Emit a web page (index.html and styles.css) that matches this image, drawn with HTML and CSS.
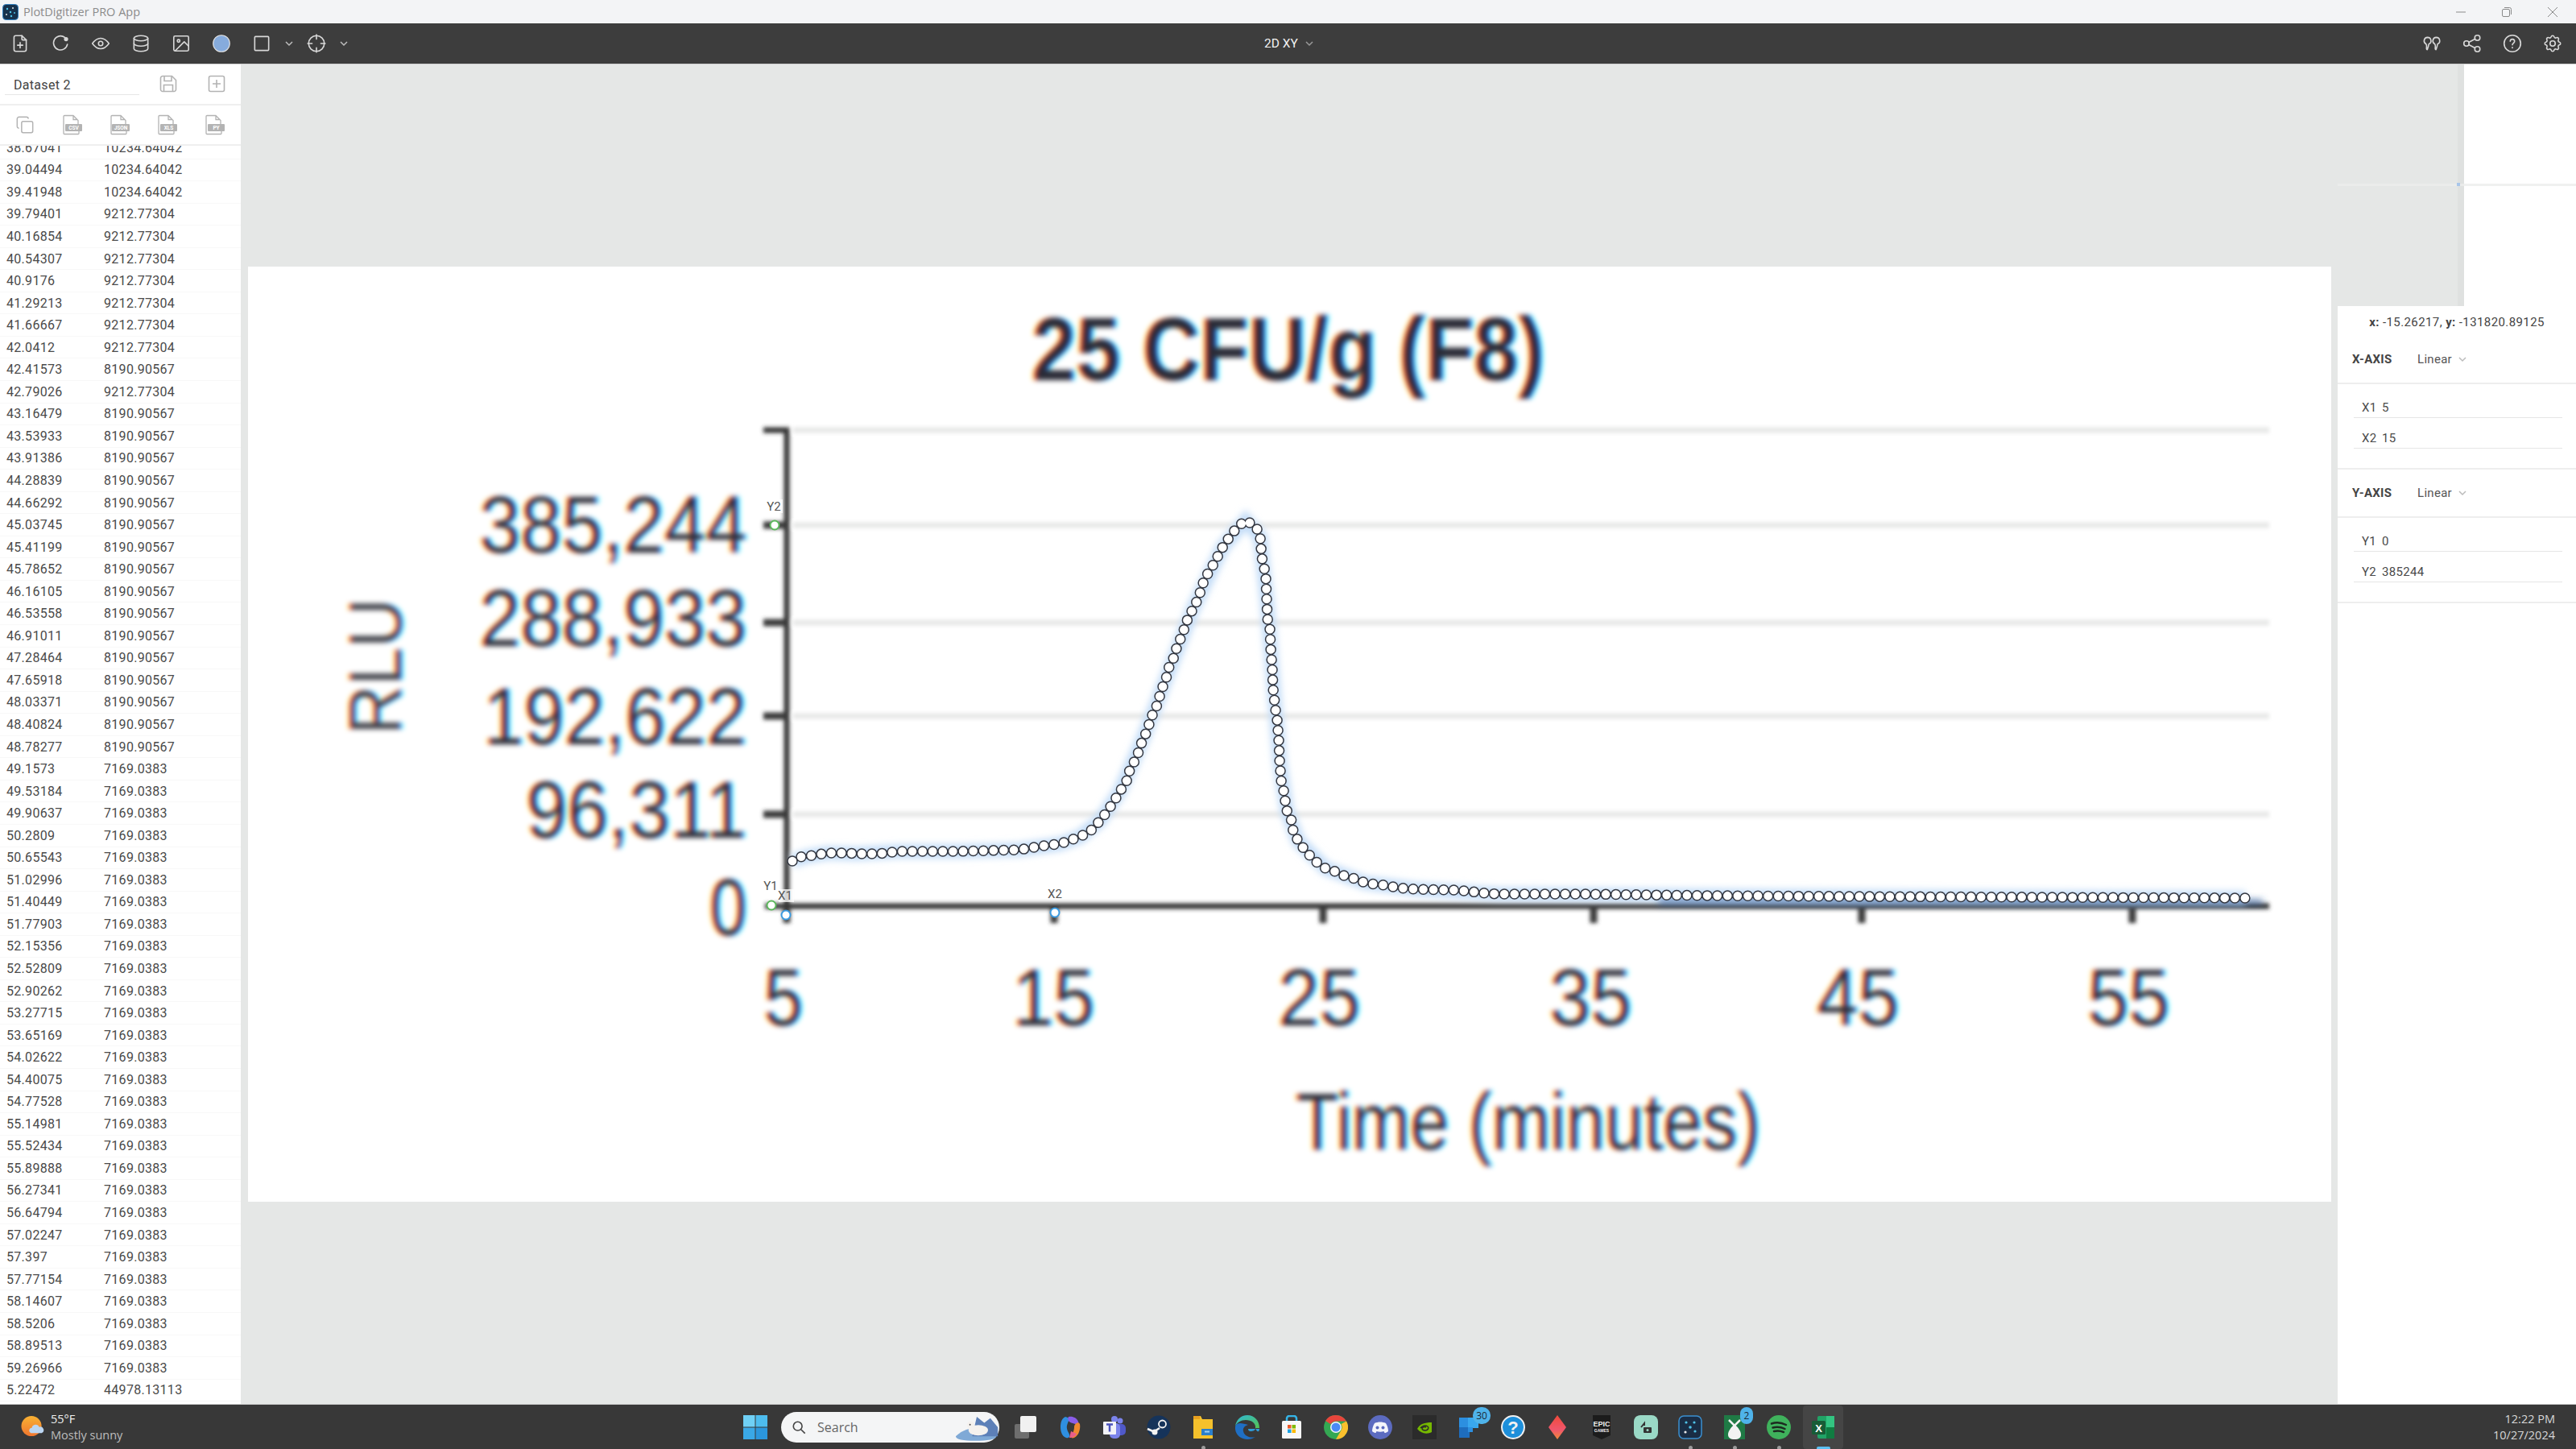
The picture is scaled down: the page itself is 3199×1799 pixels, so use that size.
FILE: index.html
```html
<!DOCTYPE html>
<html lang="en">
<head>
    <meta charset="UTF-8">
    <title>PlotDigitizer PRO App</title>
    <link rel="stylesheet" href="styles.css">
</head>
<body>

    <div class="titlebar">
        <svg class="app-logo" viewBox="0 0 20 20">
            <rect x="0.5" y="0.5" width="19" height="19" rx="4" fill="#17324d" stroke="#2f7fc0"/>
            <circle cx="6" cy="6" r="1.2" fill="#4fc3e8"/><circle cx="13" cy="5" r="1" fill="#e8e8e8"/>
            <circle cx="10" cy="10" r="1.2" fill="#4fc3e8"/><circle cx="15" cy="11" r="1" fill="#4fc3e8"/>
            <circle cx="5" cy="13" r="1" fill="#e8e8e8"/><circle cx="11" cy="15" r="1.2" fill="#4fc3e8"/>
        </svg>
        <span class="app-name">PlotDigitizer PRO App</span>
        <div class="win-controls">
            <svg viewBox="0 0 14 14"><path d="M1 7h12"/></svg>
            <svg viewBox="0 0 14 14"><rect x="1.5" y="3.5" width="9" height="9" rx="1.5"/><path d="M4 1.5h6.5a2 2 0 0 1 2 2V10"/></svg>
            <svg viewBox="0 0 14 14"><path d="M1 1l12 12M13 1L1 13"/></svg>
        </div>
    </div>

    <div class="toolbar">
        <div class="tool-group">
            <svg class="tool" viewBox="0 0 24 24"><path d="M14 3v4a1 1 0 0 0 1 1h4"/><path d="M17 21H7a2 2 0 0 1-2-2V5a2 2 0 0 1 2-2h7l5 5v11a2 2 0 0 1-2 2z"/><path d="M12 11v6M9 14h6"/></svg>
            <svg class="tool" viewBox="0 0 24 24"><path d="M20 13a8 8 0 1 1-3-8"/><circle class="solid" cx="18.5" cy="7" r="2.4"/></svg>
            <svg class="tool" viewBox="0 0 24 24"><path d="M12 18c-3.6 0-6.6-2-9.5-6C5.400 8 8.400 6 12 6s6.600 2 9.500 6c-2.900 4-5.900 6-9.500 6z"/><circle cx="12" cy="12" r="2.500"/></svg>
            <svg class="tool" viewBox="0 0 24 24"><ellipse cx="12" cy="6" rx="8" ry="3"/><path d="M4 6v6c0 1.660 3.580 3 8 3s8-1.340 8-3V6"/><path d="M4 12v6c0 1.660 3.580 3 8 3s8-1.340 8-3v-6"/></svg>
            <svg class="tool" viewBox="0 0 24 24"><rect x="3.500" y="3.500" width="17" height="17" rx="1.500"/><circle cx="9" cy="9" r="1.500"/><path d="M20.500 15l-5-5L5 20.500"/></svg>
            <svg class="tool" viewBox="0 0 24 24"><circle class="color-dot" cx="12" cy="12" r="9.500"/></svg>
            <svg class="tool" viewBox="0 0 24 24"><rect x="4" y="4" width="16" height="16" rx="1"/></svg>
            <svg class="chev" viewBox="0 0 12 12"><path d="M2 4l4 4 4-4"/></svg>
            <svg class="tool tool-wide" viewBox="0 0 24 24"><circle cx="12" cy="12" r="9"/><path d="M12 2v5M12 17v5M2 12h5M17 12h5"/></svg>
            <svg class="chev" viewBox="0 0 12 12"><path d="M2 4l4 4 4-4"/></svg>
        </div>
        <div class="mode-select">2D XY <svg class="chev" viewBox="0 0 12 12"><path d="M2 4l4 4 4-4"/></svg></div>
        <div class="tool-group tool-group-right">
            <svg class="tool" viewBox="0 0 24 24"><path d="M7 5a4 4 0 0 1 1.500 7.700c-.3 2.300-.8 4.100-1.800 6.300-1 0-.9-1.500-.7-3.300.1-1.200 0-2.300-.8-3.200A4 4 0 0 1 7 5z"/><path d="M17 5a4 4 0 0 1 1.500 7.700c-.3 2.300-.8 4.100-1.800 6.300-1 0-.9-1.500-.7-3.300.1-1.200 0-2.300-.8-3.200A4 4 0 0 1 17 5z"/></svg>
            <svg class="tool" viewBox="0 0 24 24"><circle cx="5.500" cy="12" r="3"/><circle cx="18" cy="5.500" r="3"/><circle cx="18" cy="18.500" r="3"/><path d="M8.200 10.700l7-3.700M8.200 13.300l7 3.700"/></svg>
            <svg class="tool" viewBox="0 0 24 24"><circle cx="12" cy="12" r="9.500"/><path d="M12 16.500v.5M12 13.500c0-2 2.500-1.800 2.500-4a2.500 2.500 0 0 0-5 0"/></svg>
            <svg class="tool" viewBox="0 0 24 24"><path d="M10.325 4.317c.426-1.756 2.924-1.756 3.350 0a1.724 1.724 0 0 0 2.573 1.066c1.543-.94 3.310.826 2.370 2.370a1.724 1.724 0 0 0 1.065 2.572c1.756.426 1.756 2.924 0 3.350a1.724 1.724 0 0 0-1.066 2.573c.94 1.543-.826 3.310-2.370 2.370a1.724 1.724 0 0 0-2.572 1.065c-.426 1.756-2.924 1.756-3.350 0a1.724 1.724 0 0 0-2.573-1.066c-1.543.94-3.310-.826-2.370-2.370a1.724 1.724 0 0 0-1.065-2.572c-1.756-.426-1.756-2.924 0-3.350a1.724 1.724 0 0 0 1.066-2.573c-.94-1.543.826-3.310 2.370-2.370 1 .608 2.296.07 2.572-1.065z"/><circle cx="12" cy="12" r="3"/></svg>
        </div>
    </div>

    <div class="workspace">

        <aside class="sidebar">
            <div class="dataset-head">
                <div class="dataset-name">Dataset 2</div>
                <svg class="side-icon save-icon" viewBox="0 0 24 24"><path d="M5 2.500h11.500l5 5V19a2.500 2.500 0 0 1-2.500 2.500H5A2.500 2.500 0 0 1 2.500 19V5A2.500 2.500 0 0 1 5 2.500z"/><path d="M7 2.500v6h9v-6M6.500 21.500v-8h11v8"/></svg>
                <svg class="side-icon add-icon" viewBox="0 0 24 24"><rect x="2.500" y="2.500" width="19" height="19" rx="2"/><path d="M12 7v10M7 12h10"/></svg>
            </div>
            <div class="export-row">
                <svg class="side-icon" viewBox="0 0 26 26"><rect x="8.500" y="8.500" width="15" height="15" rx="2"/><path d="M5 17.500a2.500 2.500 0 0 1-2.500-2.500V5A2.500 2.500 0 0 1 5 2.500h10A2.500 2.500 0 0 1 17.500 5"/></svg>
                <svg class="file-icon" viewBox="0 0 26 26"><path d="M15 1.500v5h5M22 20.500v3a1 1 0 0 1-1 1H4a1 1 0 0 1-1-1v-21a1 1 0 0 1 1-1h11l6 6v5"/><rect class="file-band" x="5" y="12" width="21" height="9" rx="1"/><text class="file-type" x="15.500" y="19">CSV</text></svg>
                <svg class="file-icon" viewBox="0 0 26 26"><path d="M15 1.500v5h5M22 20.500v3a1 1 0 0 1-1 1H4a1 1 0 0 1-1-1v-21a1 1 0 0 1 1-1h11l6 6v5"/><rect class="file-band" x="4" y="12" width="22" height="9" rx="1"/><text class="file-type" x="15" y="19">JSON</text></svg>
                <svg class="file-icon" viewBox="0 0 26 26"><path d="M15 1.500v5h5M22 20.500v3a1 1 0 0 1-1 1H4a1 1 0 0 1-1-1v-21a1 1 0 0 1 1-1h11l6 6v5"/><rect class="file-band" x="5" y="12" width="21" height="9" rx="1"/><text class="file-type" x="15.500" y="19">XLS</text></svg>
                <svg class="file-icon" viewBox="0 0 26 26"><path d="M15 1.500v5h5M22 20.500v3a1 1 0 0 1-1 1H4a1 1 0 0 1-1-1v-21a1 1 0 0 1 1-1h11l6 6v5"/><rect class="file-band" x="5" y="12" width="21" height="9" rx="1"/><text class="file-type" x="15.500" y="19">PY</text></svg>
            </div>
            <div class="data-list">
                <div class="data-rows">
                    <div class="data-row"><span>38.67041</span><span>10234.64042</span></div>
                    <div class="data-row"><span>39.04494</span><span>10234.64042</span></div>
                    <div class="data-row"><span>39.41948</span><span>10234.64042</span></div>
                    <div class="data-row"><span>39.79401</span><span>9212.77304</span></div>
                    <div class="data-row"><span>40.16854</span><span>9212.77304</span></div>
                    <div class="data-row"><span>40.54307</span><span>9212.77304</span></div>
                    <div class="data-row"><span>40.9176</span><span>9212.77304</span></div>
                    <div class="data-row"><span>41.29213</span><span>9212.77304</span></div>
                    <div class="data-row"><span>41.66667</span><span>9212.77304</span></div>
                    <div class="data-row"><span>42.0412</span><span>9212.77304</span></div>
                    <div class="data-row"><span>42.41573</span><span>8190.90567</span></div>
                    <div class="data-row"><span>42.79026</span><span>9212.77304</span></div>
                    <div class="data-row"><span>43.16479</span><span>8190.90567</span></div>
                    <div class="data-row"><span>43.53933</span><span>8190.90567</span></div>
                    <div class="data-row"><span>43.91386</span><span>8190.90567</span></div>
                    <div class="data-row"><span>44.28839</span><span>8190.90567</span></div>
                    <div class="data-row"><span>44.66292</span><span>8190.90567</span></div>
                    <div class="data-row"><span>45.03745</span><span>8190.90567</span></div>
                    <div class="data-row"><span>45.41199</span><span>8190.90567</span></div>
                    <div class="data-row"><span>45.78652</span><span>8190.90567</span></div>
                    <div class="data-row"><span>46.16105</span><span>8190.90567</span></div>
                    <div class="data-row"><span>46.53558</span><span>8190.90567</span></div>
                    <div class="data-row"><span>46.91011</span><span>8190.90567</span></div>
                    <div class="data-row"><span>47.28464</span><span>8190.90567</span></div>
                    <div class="data-row"><span>47.65918</span><span>8190.90567</span></div>
                    <div class="data-row"><span>48.03371</span><span>8190.90567</span></div>
                    <div class="data-row"><span>48.40824</span><span>8190.90567</span></div>
                    <div class="data-row"><span>48.78277</span><span>8190.90567</span></div>
                    <div class="data-row"><span>49.1573</span><span>7169.0383</span></div>
                    <div class="data-row"><span>49.53184</span><span>7169.0383</span></div>
                    <div class="data-row"><span>49.90637</span><span>7169.0383</span></div>
                    <div class="data-row"><span>50.2809</span><span>7169.0383</span></div>
                    <div class="data-row"><span>50.65543</span><span>7169.0383</span></div>
                    <div class="data-row"><span>51.02996</span><span>7169.0383</span></div>
                    <div class="data-row"><span>51.40449</span><span>7169.0383</span></div>
                    <div class="data-row"><span>51.77903</span><span>7169.0383</span></div>
                    <div class="data-row"><span>52.15356</span><span>7169.0383</span></div>
                    <div class="data-row"><span>52.52809</span><span>7169.0383</span></div>
                    <div class="data-row"><span>52.90262</span><span>7169.0383</span></div>
                    <div class="data-row"><span>53.27715</span><span>7169.0383</span></div>
                    <div class="data-row"><span>53.65169</span><span>7169.0383</span></div>
                    <div class="data-row"><span>54.02622</span><span>7169.0383</span></div>
                    <div class="data-row"><span>54.40075</span><span>7169.0383</span></div>
                    <div class="data-row"><span>54.77528</span><span>7169.0383</span></div>
                    <div class="data-row"><span>55.14981</span><span>7169.0383</span></div>
                    <div class="data-row"><span>55.52434</span><span>7169.0383</span></div>
                    <div class="data-row"><span>55.89888</span><span>7169.0383</span></div>
                    <div class="data-row"><span>56.27341</span><span>7169.0383</span></div>
                    <div class="data-row"><span>56.64794</span><span>7169.0383</span></div>
                    <div class="data-row"><span>57.02247</span><span>7169.0383</span></div>
                    <div class="data-row"><span>57.397</span><span>7169.0383</span></div>
                    <div class="data-row"><span>57.77154</span><span>7169.0383</span></div>
                    <div class="data-row"><span>58.14607</span><span>7169.0383</span></div>
                    <div class="data-row"><span>58.5206</span><span>7169.0383</span></div>
                    <div class="data-row"><span>58.89513</span><span>7169.0383</span></div>
                    <div class="data-row"><span>59.26966</span><span>7169.0383</span></div>
                    <div class="data-row"><span>5.22472</span><span>44978.13113</span></div>
                </div>
            </div>
        </aside>

        <main class="canvas">
            <!-- viewBox uses page coordinates so the digitized points read straight from the screenshot -->
            <svg class="plot" viewBox="308 331 2587 1161">
                <defs>
                    <filter id="lcd" filterUnits="userSpaceOnUse" x="288" y="311" width="2627" height="1201" color-interpolation-filters="sRGB">
                        <feGaussianBlur in="SourceGraphic" stdDeviation="3" result="soft"/>
                        <feOffset in="soft" dx="2.500" result="softR"/>
                        <feColorMatrix in="softR" values="1 0 0 0 0 0 0 0 0 0 0 0 0 0 0 0 0 0 1 0" result="chanR"/>
                        <feColorMatrix in="soft" values="0 0 0 0 0 0 1 0 0 0 0 0 0 0 0 0 0 0 1 0" result="chanG"/>
                        <feOffset in="soft" dx="-2.500" result="softB"/>
                        <feColorMatrix in="softB" values="0 0 0 0 0 0 0 0 0 0 0 0 1 0 0 0 0 0 1 0" result="chanB"/>
                        <feBlend in="chanR" in2="chanG" mode="screen" result="chanRG"/>
                        <feBlend in="chanRG" in2="chanB" mode="screen"/>
                    </filter>
                    <filter id="soft" filterUnits="userSpaceOnUse" x="900" y="500" width="1960" height="680">
                        <feGaussianBlur stdDeviation="2.600"/>
                    </filter>
                    <filter id="glow" filterUnits="userSpaceOnUse" x="900" y="600" width="1960" height="560">
                        <feGaussianBlur stdDeviation="4"/>
                    </filter>
                </defs>

                <rect x="308" y="331" width="2587" height="1161" fill="#fff"/>

                <g filter="url(#lcd)">
                    <rect x="268" y="291" width="2667" height="1241" fill="#fff"/>
                    <text class="plot-title" x="1281" y="472" textLength="637" lengthAdjust="spacingAndGlyphs">25 CFU/g (F8)</text>
                    <text class="plot-num" x="595" y="686" textLength="332" lengthAdjust="spacingAndGlyphs">385,244</text>
                    <text class="plot-num" x="595" y="802" textLength="332" lengthAdjust="spacingAndGlyphs">288,933</text>
                    <text class="plot-num" x="600" y="924" textLength="327" lengthAdjust="spacingAndGlyphs">192,622</text>
                    <text class="plot-num" x="653" y="1040" textLength="274" lengthAdjust="spacingAndGlyphs">96,311</text>
                    <text class="plot-num" x="881" y="1161" textLength="46" lengthAdjust="spacingAndGlyphs">0</text>
                    <text class="plot-num" x="948" y="1273" textLength="49" lengthAdjust="spacingAndGlyphs">5</text>
                    <text class="plot-num" x="1257" y="1273" textLength="102" lengthAdjust="spacingAndGlyphs">15</text>
                    <text class="plot-num" x="1587" y="1273" textLength="102" lengthAdjust="spacingAndGlyphs">25</text>
                    <text class="plot-num" x="1924" y="1273" textLength="102" lengthAdjust="spacingAndGlyphs">35</text>
                    <text class="plot-num" x="2256" y="1273" textLength="102" lengthAdjust="spacingAndGlyphs">45</text>
                    <text class="plot-num" x="2592" y="1273" textLength="102" lengthAdjust="spacingAndGlyphs">55</text>
                    <text class="plot-num" x="1609" y="1427" textLength="577" lengthAdjust="spacingAndGlyphs">Time (minutes)</text>
                    <text class="plot-axis-name" transform="translate(498 912) rotate(-90)" textLength="169" lengthAdjust="spacingAndGlyphs">RLU</text>
                </g>

                <g filter="url(#soft)">
                    <path class="grid-line" d="M985 534H2818M985 652H2818M985 773H2818M985 889H2818M985 1011H2818"/>
                    <path class="axis-line" d="M948 534H977V1125M950 1125H2818"/>
                    <path class="tick-line" d="M948 652H977M948 773H977M948 889H977M948 1011H977"/>
                    <path class="tick-line" d="M977 1125V1146M1309 1125V1146M1643 1125V1146M1979 1125V1146M2312 1125V1146M2648 1125V1146"/>
                </g>

                <polyline class="trace-glow" filter="url(#glow)" points="984,1069 1003,1063 1028,1059 1065,1060 1116,1057 1191,1057 1266,1055 1316,1048 1341,1039 1366,1019 1391,982 1419,918 1448,843 1482,755 1518,680 1547,646 1565,667 1573,743 1580,830 1589,943 1598,1006 1612,1044 1646,1078 1695,1096 1758,1104 1861,1110 2129,1112 2295,1113 2789,1115"/>
                <polyline class="trace-shade" filter="url(#glow)" points="2060,1120 2810,1120"/>
                <polyline class="trace-ring" points="984,1069 991,1064 1003,1063 1016,1061 1028,1059 1053,1059 1065,1060 1090,1060 1116,1057 1191,1057 1266,1055 1303,1049 1316,1048 1329,1043 1341,1039 1354,1032 1366,1019 1376,1006 1384,994 1391,982 1399,970 1403,956 1410,943 1415,931 1419,918 1426,905 1428,893 1435,881 1439,868 1443,855 1448,843 1451,830 1457,818 1461,805 1466,793 1471,780 1475,768 1482,755 1488,743 1496,718 1504,706 1511,693 1518,680 1526,668 1536,655 1547,646 1560,654 1565,667 1567,692 1570,705 1572,718 1573,743 1574,768 1577,780 1578,805 1580,830 1581,855 1584,881 1586,893 1588,918 1589,943 1591,969 1594,981 1596,994 1598,1006 1604,1019 1606,1032 1612,1044 1621,1056 1633,1069 1646,1078 1658,1082 1671,1088 1683,1091 1695,1096 1708,1098 1721,1099 1734,1102 1758,1104 1808,1105 1846,1109 1861,1110 1963,1110 2129,1112 2295,1113 2789,1115"/>
                <polyline class="trace-fill" points="984,1069 991,1064 1003,1063 1016,1061 1028,1059 1053,1059 1065,1060 1090,1060 1116,1057 1191,1057 1266,1055 1303,1049 1316,1048 1329,1043 1341,1039 1354,1032 1366,1019 1376,1006 1384,994 1391,982 1399,970 1403,956 1410,943 1415,931 1419,918 1426,905 1428,893 1435,881 1439,868 1443,855 1448,843 1451,830 1457,818 1461,805 1466,793 1471,780 1475,768 1482,755 1488,743 1496,718 1504,706 1511,693 1518,680 1526,668 1536,655 1547,646 1560,654 1565,667 1567,692 1570,705 1572,718 1573,743 1574,768 1577,780 1578,805 1580,830 1581,855 1584,881 1586,893 1588,918 1589,943 1591,969 1594,981 1596,994 1598,1006 1604,1019 1606,1032 1612,1044 1621,1056 1633,1069 1646,1078 1658,1082 1671,1088 1683,1091 1695,1096 1708,1098 1721,1099 1734,1102 1758,1104 1808,1105 1846,1109 1861,1110 1963,1110 2129,1112 2295,1113 2789,1115"/>

                <rect class="cal-tag" x="951" y="620" width="21" height="17"/><text class="cal-label" x="961" y="634">Y2</text>
                <circle class="cal-y" cx="962" cy="652" r="5.500"/>
                <rect class="cal-tag" x="948" y="1091" width="19" height="17"/><text class="cal-label" x="957" y="1105">Y1</text>
                <circle class="cal-y" cx="958" cy="1124" r="5.500"/>
                <rect class="cal-tag" x="967" y="1104" width="19" height="16"/><text class="cal-label" x="975" y="1117">X1</text>
                <circle class="cal-x" cx="976" cy="1136" r="5.500"/>
                <text class="cal-label" x="1310" y="1115">X2</text>
                <circle class="cal-x" cx="1310" cy="1133" r="5.500"/>
            </svg>
        </main>

        <aside class="side-right">
            <div class="magnifier">
                <div class="magnifier-strip"></div>
                <div class="magnifier-view"></div>
                <div class="magnifier-line"></div>
                <div class="magnifier-dot"></div>
            </div>
            <div class="axis-panel">
                <div class="cursor-pos"><b>x:</b> -15.26217, <b>y:</b> -131820.89125</div>
                <div class="axis-head"><b>X-AXIS</b><span class="axis-scale">Linear <svg class="chev" viewBox="0 0 12 12"><path d="M2 4l4 4 4-4"/></svg></span></div>
                <div class="axis-fields">
                    <div class="axis-field"><span class="field-key">X1</span>5</div>
                    <div class="axis-field"><span class="field-key">X2</span>15</div>
                </div>
                <div class="axis-head"><b>Y-AXIS</b><span class="axis-scale">Linear <svg class="chev" viewBox="0 0 12 12"><path d="M2 4l4 4 4-4"/></svg></span></div>
                <div class="axis-fields">
                    <div class="axis-field"><span class="field-key">Y1</span>0</div>
                    <div class="axis-field"><span class="field-key">Y2</span>385244</div>
                </div>
            </div>
        </aside>
    </div>

    <div class="taskbar">
        <div class="weather">
            <svg class="weather-icon" viewBox="0 0 30 30">
                <defs><linearGradient id="sun" x1="0" y1="0" x2="0" y2="1"><stop offset="0" stop-color="#f9b233"/><stop offset="1" stop-color="#f0762f"/></linearGradient></defs>
                <circle cx="13.500" cy="14" r="13" fill="url(#sun)"/>
                <path d="M13 23a3.500 3.500 0 0 1 1-6.800 5 5 0 0 1 9.500-1 4 4 0 0 1 3 7.800z" fill="#bcd6f2"/>
            </svg>
            <div class="weather-text"><span class="weather-temp">55°F</span><span class="weather-desc">Mostly sunny</span></div>
        </div>

        <div class="task-apps">
            <svg class="task-icon" viewBox="0 0 30 30"><rect x="0" y="0" width="14.500" height="14.500" fill="#6fd0f5"/><rect x="15.500" y="0" width="14.500" height="14.500" fill="#4dbcee"/><rect x="0" y="15.500" width="14.500" height="14.500" fill="#3aa8e6"/><rect x="15.500" y="15.500" width="14.500" height="14.500" fill="#2b96dc"/></svg>
            <div class="task-search">
                <svg class="search-glass" viewBox="0 0 20 20"><circle cx="8.500" cy="8.500" r="6"/><path d="M13 13l5.500 5.500"/></svg>
                <span>Search</span>
                <svg class="search-art" viewBox="0 0 60 36"><path d="M2 30c8-8 20-12 36-12s18 8 18 12-12 6-28 6S2 34 2 30z" fill="#7fa9d6"/><path d="M30 4l10 8 8-6 10 12v12H24z" fill="#5d80b8"/><ellipse cx="32" cy="22" rx="13" ry="7" fill="#f4f1ee"/><circle cx="22" cy="15" r="5" fill="#f4f1ee"/><circle cx="21" cy="14.500" r="1" fill="#444"/></svg>
            </div>
            <svg class="task-icon" viewBox="0 0 30 30"><rect x="1" y="11" width="18" height="18" rx="2" fill="#6e6e6e"/><rect x="8" y="1" width="20" height="20" rx="2" fill="#f1f1f1"/></svg>
            <svg class="task-icon" viewBox="0 0 30 30"><path d="M9 2c-5 2-6 8-6 13s2 12 7 13c3 1 5-1 4-4-1-3-4-6-3-11s4-7 1-10z" fill="#2f8fe0"/><path d="M13 2c5-1 10 1 12 6 1 3 0 4-3 3-3-1-7-1-9-4-1-2-1-4 0-5z" fill="#8b5de8"/><path d="M27 11c1 6-1 14-7 17-3 1-5 0-3-3 2-4 3-7 3-10 0-4 5-8 7-4z" fill="#f0892f"/><path d="M14 28c4 0 8-2 9-5l-7-3z" fill="#e85e8a"/></svg>
            <svg class="task-icon" viewBox="0 0 30 30"><circle cx="22" cy="7" r="3.500" fill="#7b83eb"/><rect x="15" y="11" width="14" height="14" rx="5" fill="#5059c9"/><circle cx="15" cy="5" r="4" fill="#7b83eb"/><rect x="9" y="10" width="13" height="19" rx="5" fill="#7b83eb"/><rect x="1" y="8" width="16" height="16" rx="1" fill="#f2f2f8"/><path d="M5 11.500h8M9 11.500v9" stroke="#4b53bc" stroke-width="2.500" fill="none"/></svg>
            <svg class="task-icon" viewBox="0 0 30 30"><circle cx="15" cy="15" r="14.500" fill="#15335a"/><circle cx="19.500" cy="11" r="4.500" fill="none" stroke="#f2f2f2" stroke-width="1.800"/><path d="M1 17l8 3.500 7-4.500" fill="none" stroke="#f2f2f2" stroke-width="2.500"/><circle cx="10" cy="21" r="3.500" fill="#f2f2f2"/></svg>
            <div class="task-slot is-running">
                <svg class="task-icon" viewBox="0 0 30 30"><path d="M3 1h9l2 4h13v24H3z" fill="#f5c12c"/><path d="M3 1h8v4H3z" fill="#e8a01f"/><rect x="13" y="17" width="14" height="8" fill="#2b7fcc"/><rect x="17" y="19.500" width="6" height="2" fill="#9fd0f5"/></svg>
            </div>
            <svg class="task-icon" viewBox="0 0 30 30"><defs><linearGradient id="edge" x1="0" y1="0" x2="1" y2="1"><stop offset="0" stop-color="#2fb8d8"/><stop offset="1" stop-color="#54c34e"/></linearGradient></defs><path d="M15 0C7 0 1 6 0 14c2-5 7-8 13-8 7 0 13 4 12 10h5C30 7 24 0 15 0z" fill="url(#edge)"/><path d="M0 14c-1 9 6 16 15 16 4 0 7-1 10-3-6 2-14-1-15-7-1-4 2-7 6-8-7-2-14-4-16 2z" fill="#1f6fc4"/><path d="M25 16c0 3-3 4-6 4-2 0-3-1-3-3h14c0 4-3 5-5-1z" fill="#2f9cd8"/></svg>
            <svg class="task-icon" viewBox="0 0 30 30"><path d="M9 8V4a3 3 0 0 1 3-3h6a3 3 0 0 1 3 3v4" fill="none" stroke="#35b5e8" stroke-width="2.500"/><rect x="3" y="7" width="24" height="22" rx="1.500" fill="#f7f7f7"/><rect x="10" y="12" width="4.500" height="4.500" fill="#ef5a29"/><rect x="15.500" y="12" width="4.500" height="4.500" fill="#7fba00"/><rect x="10" y="17.500" width="4.500" height="4.500" fill="#1aa3e8"/><rect x="15.500" y="17.500" width="4.500" height="4.500" fill="#fbb900"/></svg>
            <svg class="task-icon" viewBox="0 0 30 30"><circle cx="15" cy="15" r="15" fill="#34a853"/><path d="M15 0a15 15 0 0 1 13 7.500H15a7.500 7.500 0 0 0-6.500 3.750L2 7A15 15 0 0 1 15 0z" fill="#e8453c"/><path d="M28 7.500A15 15 0 0 1 15 30l6.500-11.250A7.500 7.500 0 0 0 21.500 11z" fill="#fbc02d"/><circle cx="15" cy="15" r="7" fill="#f5f5f5"/><circle cx="15" cy="15" r="5.500" fill="#4a8af4"/></svg>
            <svg class="task-icon" viewBox="0 0 30 30"><circle cx="15" cy="15" r="15" fill="#5c6bc0"/><path d="M8 10c4-2 10-2 14 0 2 3 3 7 3 10-2 1.500-3 2-4.500 2l-1-2c-3 1-6 1-9 0l-1 2C8 22 7 21.500 5 20c0-3 1-7 3-10z" fill="#f4f4fb"/><circle cx="11.500" cy="15.500" r="2" fill="#5c6bc0"/><circle cx="18.500" cy="15.500" r="2" fill="#5c6bc0"/></svg>
            <svg class="task-icon" viewBox="0 0 30 30"><rect width="30" height="30" fill="#2b2b2b"/><path d="M6 17c3-6 9-8 18-8v12c-6 3-13 2-18-4z" fill="#76b900"/><path d="M10 16c2-3 6-4 9-2 2 2 0 5-3 5-2 0-4-1-4-3 1-1 3-2 5-1" fill="none" stroke="#2b2b2b" stroke-width="1.500"/></svg>
            <div class="task-slot">
                <svg class="task-icon" viewBox="0 0 30 30"><rect x="3" y="3" width="13" height="13" fill="#2c8fe0"/><rect x="14" y="3" width="13" height="13" fill="#39a7ee"/><rect x="3" y="15" width="13" height="13" fill="#1e6dbe"/><rect x="14" y="15" width="6" height="6" fill="#2c8fe0"/></svg>
                <span class="task-badge task-badge-wide">30</span>
            </div>
            <svg class="task-icon" viewBox="0 0 30 30"><circle cx="15" cy="15" r="14" fill="#1d8fdb" stroke="#f0f0f0" stroke-width="2"/><text class="help-mark" x="15" y="23">?</text></svg>
            <svg class="task-icon" viewBox="0 0 30 30"><defs><linearGradient id="gem" x1="0" y1="0" x2="0" y2="1"><stop offset="0" stop-color="#f04a3a"/><stop offset="0.6" stop-color="#f0566c"/><stop offset="1" stop-color="#f08a3a"/></linearGradient></defs><path d="M15 0l11 15-11 15L4 15z" fill="url(#gem)"/></svg>
            <svg class="task-icon" viewBox="0 0 30 30"><path d="M4 0h22v25l-11 5-11-5z" fill="#1c1c1c"/><text class="epic-big" x="15" y="14">EPIC</text><text class="epic-small" x="15" y="21">GAMES</text></svg>
            <svg class="task-icon" viewBox="0 0 30 30"><rect width="30" height="30" rx="8" fill="#9ad9c6"/><path d="M9 15l4-5v3" fill="none" stroke="#333" stroke-width="2"/><rect x="12" y="15" width="10" height="7" rx="1" fill="#333"/><circle cx="17" cy="18.500" r="1.500" fill="#9ad9c6"/></svg>
            <div class="task-slot is-running">
                <svg class="task-icon" viewBox="0 0 30 30"><rect x="1" y="1" width="28" height="28" rx="6" fill="#1a2d45" stroke="#3a8fd0" stroke-width="1.500"/><circle cx="10" cy="9" r="1.600" fill="#4fc3e8"/><circle cx="20" cy="9" r="1.600" fill="#4fc3e8"/><circle cx="15" cy="15" r="1.800" fill="#4fc3e8"/><circle cx="9" cy="21" r="1.600" fill="#e8e8e8"/><circle cx="21" cy="20" r="1.600" fill="#4fc3e8"/></svg>
            </div>
            <div class="task-slot is-running">
                <svg class="task-icon" viewBox="0 0 30 30"><rect x="2" y="0" width="26" height="30" fill="#1f7a45"/><path d="M15 30c-5 0-8-2-8-6 0-5 5-10 8-13 3 3 8 8 8 13 0 4-3 6-8 6z" fill="#f2f2f2"/><path d="M8 6l7 7 7-7" fill="none" stroke="#f2f2f2" stroke-width="2.500"/></svg>
                <span class="task-badge">2</span>
            </div>
            <div class="task-slot is-running">
                <svg class="task-icon" viewBox="0 0 30 30"><circle cx="15" cy="15" r="15" fill="#3fb25c"/><path d="M6 10.500c6-2 12-1.500 18 1.500M7.500 15.500c5-1.500 10-1 15 1.500M9 20c4-1 8-.7 12 1" fill="none" stroke="#1c2a20" stroke-width="2.500" stroke-linecap="round"/></svg>
            </div>
            <div class="task-slot is-active">
                <svg class="task-icon" viewBox="0 0 30 30"><rect x="8" y="1" width="21" height="28" rx="2" fill="#21a366"/><rect x="19" y="1" width="10" height="14" fill="#33c481"/><rect x="19" y="15" width="10" height="14" fill="#107c41"/><rect x="1" y="7" width="17" height="17" rx="1.500" fill="#185c37"/><text class="excel-mark" x="9.500" y="20.500">X</text></svg>
            </div>
        </div>

        <div class="clock"><span>12:22 PM</span><span>10/27/2024</span></div>
    </div>

</body>
</html>
```

FILE: styles.css
```css
* {
    box-sizing: border-box;
}

html, body {
    height: 100%;
}

body {
    margin: 0;
    display: flex;
    flex-direction: column;
    overflow: hidden;
    font-family: Roboto, "Liberation Sans", sans-serif;
    color: #444;
    background: #fff;
}

/* window title */
.titlebar {
    height: 29px;
    flex: none;
    display: flex;
    align-items: center;
    padding-left: 3px;
    background: #f3f4f6;
}

.app-logo {
    width: 20px;
    height: 20px;
}

.app-name {
    margin-left: 6px;
    font-family: "Open Sans", sans-serif;
    font-size: 14.500px;
    color: #8b8b8b;
}

.win-controls {
    margin-left: auto;
    display: flex;
    gap: 43px;
    padding-right: 22px;
}

.win-controls svg {
    width: 14px;
    height: 14px;
    fill: none;
    stroke: #8a8a8a;
    stroke-width: 1;
}

/* app toolbar */
.toolbar {
    height: 51px;
    flex: none;
    position: relative;
    display: flex;
    align-items: center;
    justify-content: space-between;
    background: #3d3d3d;
    border-bottom: 1px solid #cfcfcf;
}

.tool-group {
    display: flex;
    align-items: center;
    gap: 24px;
    padding-left: 12px;
}

.tool-group-right {
    gap: 24px;
    padding: 0 16px 0 0;
}

.tool {
    width: 26px;
    height: 26px;
    fill: none;
    stroke: #d8d8d8;
    stroke-width: 1.500;
    stroke-linecap: round;
    stroke-linejoin: round;
}

.tool .solid {
    fill: #d8d8d8;
    stroke: none;
}

.tool .color-dot {
    fill: #86abdc;
    stroke: #e6e6e6;
    stroke-width: 1;
}

.chev {
    width: 12px;
    height: 12px;
    fill: none;
    stroke: #bdbdbd;
    stroke-width: 1.500;
    margin-left: -9px;
}

.tool-wide {
    margin-left: -9px;
}

.mode-select {
    position: absolute;
    left: 1570px;
    top: 16px;
    display: flex;
    align-items: center;
    gap: 8px;
    font-size: 15.500px;
    color: #f2f2f2;
}

.mode-select .chev {
    margin: 0;
    stroke: #9a9a9a;
}

/* main area */
.workspace {
    flex: 1;
    min-height: 0;
    display: flex;
    background: #e5e7e6;
}

.sidebar {
    width: 299px;
    flex: none;
    display: flex;
    flex-direction: column;
    background: #fff;
}

.dataset-head {
    height: 51px;
    flex: none;
    display: flex;
    align-items: flex-start;
    border-bottom: 2px solid #efefef;
}

.dataset-name {
    width: 167px;
    height: 38px;
    margin-left: 6px;
    padding: 16px 0 0 11px;
    font-size: 16px;
    letter-spacing: .3px;
    color: #444;
    border-bottom: 1px solid #e6e6e6;
}

.side-icon {
    width: 24px;
    height: 24px;
    flex: none;
    fill: none;
    stroke: #b3b3b3;
    stroke-width: 1.600;
}

.save-icon {
    margin: 12px 0 0 24px;
}

.add-icon {
    margin: 12px 0 0 36px;
}

.export-row {
    height: 50px;
    flex: none;
    display: flex;
    align-items: center;
    gap: 33px;
    padding-left: 19px;
    border-bottom: 2px solid #efefef;
}

.file-icon {
    width: 26px;
    height: 26px;
    flex: none;
    fill: none;
    stroke: #b3b3b3;
    stroke-width: 1.300;
}

.file-band {
    fill: #b3b3b3;
    stroke: none;
}

.file-type {
    fill: #fff;
    stroke: none;
    font-size: 6.500px;
    font-weight: 700;
    text-anchor: middle;
}

.data-list {
    flex: 1;
    min-height: 0;
    overflow: hidden;
}

.data-rows {
    margin-top: -11px;
}

.data-row {
    height: 27.560px;
    display: grid;
    grid-template-columns: 121px 1fr;
    align-items: center;
    padding-left: 8px;
    font-size: 16px;
    letter-spacing: .3px;
    color: #4a4a4a;
    border-bottom: 1px solid #f8f8f8;
}

/* plot */
.canvas {
    flex: 1;
    min-width: 0;
    padding: 251px 8px 0 9px;
}

.plot {
    display: block;
    width: 2587px;
    height: 1161px;
}

.grid-line {
    fill: none;
    stroke: #e7e8e7;
    stroke-width: 7;
}

.axis-line {
    fill: none;
    stroke: #333;
    stroke-width: 7;
}

.tick-line {
    fill: none;
    stroke: #3a3a3a;
    stroke-width: 9;
}

.plot-title,
.plot-num,
.plot-axis-name {
    font-family: "Liberation Sans", sans-serif;
    fill: #2a2b36;
}

.plot-title {
    font-size: 112px;
    font-weight: 700;
}

.plot-num {
    font-size: 100px;
}

.plot-axis-name {
    font-size: 92px;
    fill: #3d3e46;
}

.trace-glow {
    fill: none;
    stroke: #c2dcf7;
    stroke-width: 17;
}

.trace-shade {
    fill: none;
    stroke: #2d5c9c;
    stroke-width: 5;
}

.trace-ring,
.trace-fill {
    fill: none;
    stroke-linecap: round;
    stroke-dasharray: 0 12.600;
}

.trace-ring {
    stroke: #343842;
    stroke-width: 13.500;
}

.trace-fill {
    stroke: #fff;
    stroke-width: 10.500;
}

.cal-tag {
    fill: #fff;
    fill-opacity: .75;
}

.cal-label {
    font-size: 15px;
    fill: #555;
    text-anchor: middle;
}

.cal-y,
.cal-x {
    fill: #fff;
    stroke-width: 2;
}

.cal-y {
    stroke: #5cb85c;
}

.cal-x {
    stroke: #3b9be0;
}

/* right column */
.side-right {
    width: 296px;
    flex: none;
    display: flex;
    flex-direction: column;
}

.magnifier {
    height: 300px;
    flex: none;
    position: relative;
    display: flex;
    justify-content: flex-end;
}

.magnifier-strip {
    width: 8px;
    background: #dfe1e0;
}

.magnifier-view {
    width: 139px;
    background: #fff;
}

.magnifier-line {
    position: absolute;
    left: 0;
    right: 0;
    top: 148px;
    height: 3px;
    background: #ecedec;
    opacity: .8;
}

.magnifier-dot {
    position: absolute;
    left: 148px;
    top: 147px;
    width: 4px;
    height: 4px;
    background: #a9c6ea;
}

.axis-panel {
    flex: 1;
    background: #fff;
}

.cursor-pos {
    height: 37px;
    padding-top: 11px;
    text-align: center;
    font-size: 15px;
    letter-spacing: .4px;
    color: #444;
}

.axis-head {
    height: 60px;
    display: flex;
    align-items: center;
    padding-left: 18px;
    font-size: 15px;
    border-bottom: 2px solid #eeeeee;
}

.axis-head b {
    width: 81px;
    letter-spacing: .3px;
    color: #444;
}

.axis-scale {
    display: flex;
    align-items: center;
    gap: 7px;
    font-size: 15px;
    letter-spacing: .3px;
    color: #555;
}

.axis-scale .chev {
    margin: 0;
    stroke: #bbb;
}

.axis-fields {
    padding: 4px 17px 24px 20px;
    border-bottom: 2px solid #eeeeee;
}

.axis-field {
    height: 38px;
    padding: 16px 0 0 10px;
    font-size: 15px;
    letter-spacing: .3px;
    color: #4a4a4a;
    border-bottom: 1px solid #e6e6e6;
}

.field-key {
    display: inline-block;
    width: 25px;
}

/* windows taskbar */
.taskbar {
    height: 56px;
    flex: none;
    position: relative;
    display: flex;
    align-items: center;
    background: #383838;
    border-top: 1px solid #cdcdcd;
    font-family: "Open Sans", sans-serif;
}

.weather {
    display: flex;
    align-items: center;
    gap: 8px;
    width: 923px;
    padding-left: 26px;
}

.weather-icon {
    width: 29px;
    height: 29px;
}

.weather-text {
    display: flex;
    flex-direction: column;
    font-size: 14.500px;
    line-height: 20px;
}

.weather-temp {
    color: #f2f2f2;
}

.weather-desc {
    color: #bdbdbd;
}

.task-apps {
    display: flex;
    align-items: center;
    gap: 25px;
}

.task-icon {
    width: 30px;
    height: 30px;
    flex: none;
    display: block;
}

.task-search {
    width: 271px;
    height: 38px;
    margin: 0 -7px 0 -8px;
    display: flex;
    align-items: center;
    padding-left: 13px;
    border-radius: 19px;
    background: #f4f5f6;
    font-size: 16px;
    color: #666;
}

.search-glass {
    width: 18px;
    height: 18px;
    margin-right: 14px;
    fill: none;
    stroke: #444;
    stroke-width: 1.800;
}

.search-art {
    width: 56px;
    height: 34px;
    margin-left: auto;
}

.task-slot {
    position: relative;
}

.is-running::after {
    content: "";
    position: absolute;
    left: 13px;
    bottom: -13px;
    width: 5px;
    height: 5px;
    border-radius: 50%;
    background: #9a9a9a;
}

.is-active::before {
    content: "";
    position: absolute;
    left: -10px;
    top: -12px;
    width: 50px;
    height: 54px;
    border-radius: 4px;
    background: #454545;
}

.is-active .task-icon {
    position: relative;
}

.is-active::after {
    content: "";
    position: absolute;
    left: 7px;
    bottom: -13px;
    width: 17px;
    height: 4px;
    border-radius: 2px;
    background: #5cc0f2;
}

.task-badge {
    position: absolute;
    right: -8px;
    top: -10px;
    width: 16px;
    height: 21px;
    border-radius: 10px;
    background: #4fb3ea;
    color: #1c2a36;
    font-size: 12px;
    line-height: 21px;
    text-align: center;
}

.task-badge-wide {
    right: -12px;
    width: 22px;
}

.help-mark {
    font-family: "Liberation Sans", sans-serif;
    font-size: 22px;
    font-weight: 700;
    fill: #f2f2f2;
    text-anchor: middle;
}

.epic-big,
.epic-small {
    font-family: "Liberation Sans", sans-serif;
    font-weight: 700;
    fill: #eee;
    text-anchor: middle;
}

.epic-big {
    font-size: 9px;
}

.epic-small {
    font-size: 5px;
}

.excel-mark {
    font-family: "Liberation Sans", sans-serif;
    font-size: 13px;
    font-weight: 700;
    fill: #fff;
    text-anchor: middle;
}

.clock {
    margin-left: auto;
    padding-right: 26px;
    display: flex;
    flex-direction: column;
    align-items: flex-end;
    font-size: 14.500px;
    line-height: 20px;
    color: #d6d6d6;
}
```
